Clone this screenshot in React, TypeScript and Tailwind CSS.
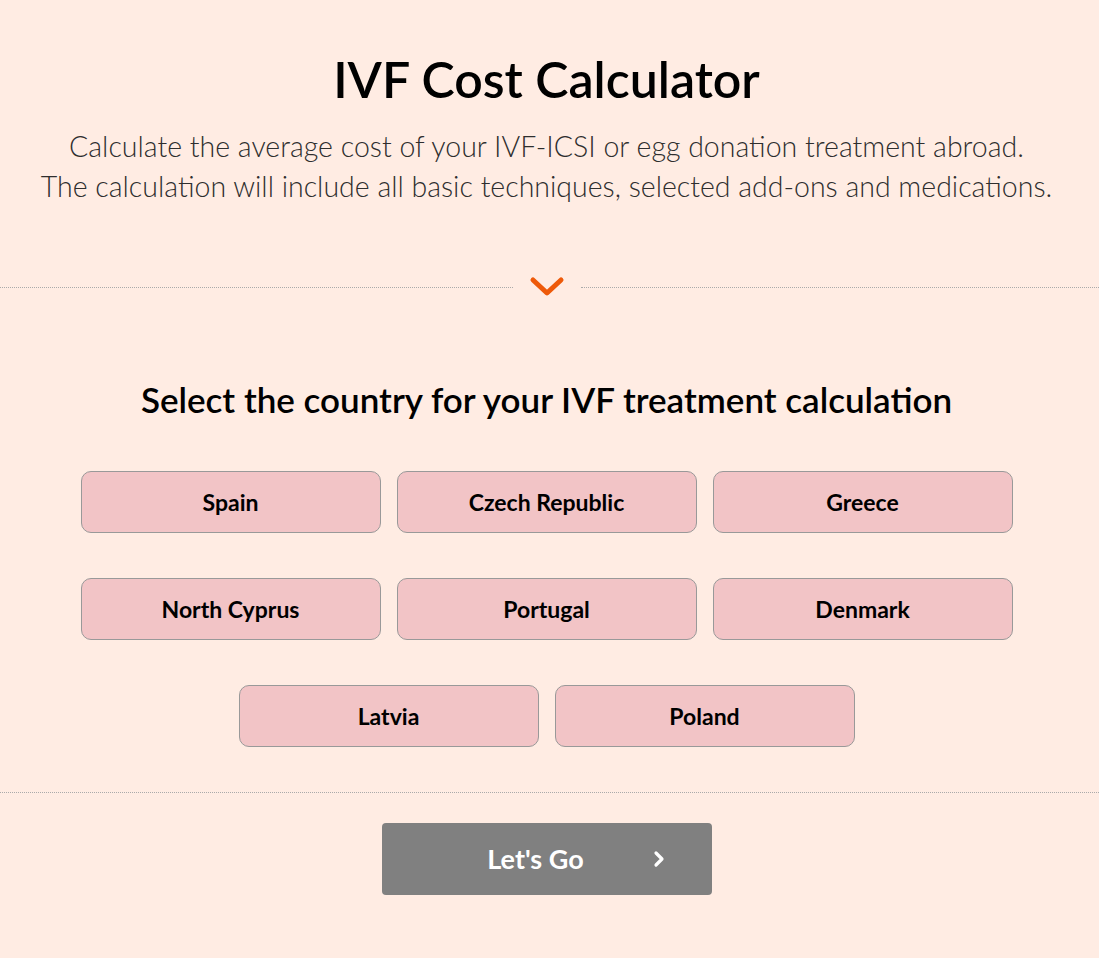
import React from "react";

const rows = [
  ["Spain", "Czech Republic", "Greece"],
  ["North Cyprus", "Portugal", "Denmark"],
  ["Latvia", "Poland"],
];

export default function App() {
  return (
    <div
      className="min-h-[958px] w-full bg-[#ffece3] text-black"
      style={{ fontFamily: "Lato, 'Noto Sans', sans-serif" }}
    >
      <div className="flex flex-col items-center pr-[6px] pt-[48px]">
        <h1 className="text-[50px] font-semibold leading-[62px]">IVF Cost Calculator</h1>
        <p className="mt-[16px] text-center text-[28.5px] font-light leading-[40px] text-[#2e2e2e]">
          Calculate the average cost of your IVF-ICSI or egg donation treatment abroad.
          <br />
          The calculation will include all basic techniques, selected add-ons and medications.
        </p>
      </div>

      <div className="mt-[70px] flex items-center">
        <div className="h-0 grow basis-0 border-t border-dotted border-[#aaa]" />
        <div className="flex w-[68px] justify-center">
          <svg width="36" height="22" viewBox="0 0 36 22">
            <path d="M4 4 L18 17 L32 4" fill="none" stroke="#ee5a0a" strokeWidth="5" strokeLinecap="round" strokeLinejoin="round" />
          </svg>
        </div>
        <div className="h-0 grow basis-[6px] border-t border-dotted border-[#aaa]" />
      </div>

      <h2 className="mt-[81px] pr-[6px] text-center text-[35px] font-semibold leading-[40px]">
        Select the country for your IVF treatment calculation
      </h2>

      <div className="mt-[52px] flex flex-col items-center gap-[45px] pr-[6px]">
        {rows.map((r, i) => (
          <div key={i} className="flex gap-[16px]">
            {r.map((c) => (
              <button
                key={c}
                className="flex h-[62px] w-[300px] items-center justify-center rounded-[10px] border border-[#999] bg-[#f2c4c6] text-[23px] font-bold"
              >
                {c}
              </button>
            ))}
          </div>
        ))}
      </div>

      <div className="mt-[45px] h-0 border-t border-dotted border-[#aaa]" />

      <div className="mt-[30px] flex justify-center pr-[6px]">
        <button className="relative flex h-[72px] w-[330px] items-center justify-center rounded-[4px] bg-[#808080] text-[27px] font-bold text-white">
          <span className="ml-[-22px]">Let's Go</span>
          <svg className="absolute right-[46px]" width="14" height="18" viewBox="0 0 14 18">
            <path d="M4 3 L10 9 L4 15" fill="none" stroke="white" strokeWidth="3.2" strokeLinecap="round" strokeLinejoin="round" />
          </svg>
        </button>
      </div>
    </div>
  );
}
